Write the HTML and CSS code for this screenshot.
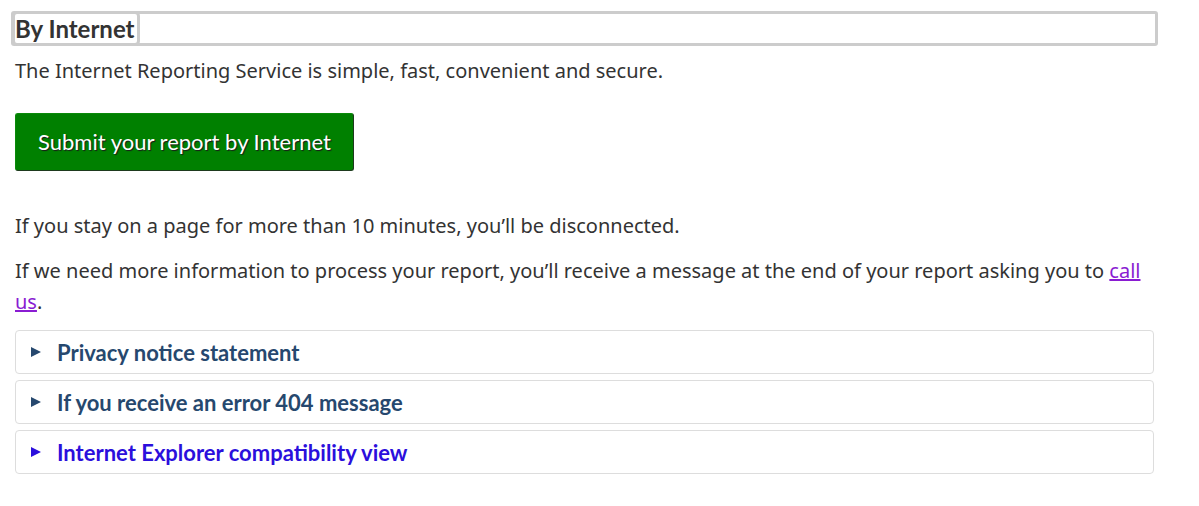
FILE: index.html
```html
<!DOCTYPE html>
<html lang="en">
<head>
<meta charset="utf-8">
<title>By Internet</title>
<link rel="stylesheet" href="styles.css">
</head>
<body>
<main class="page">
  <h2 class="section-title"><span class="section-title-text">By Internet</span></h2>
  <p class="lead">The Internet Reporting Service is simple, fast, convenient and secure.</p>
  <div class="cta-row"><a class="btn-cta" href="#">Submit your report by Internet</a></div>
  <p class="text">If you stay on a page for more than 10 minutes, you’ll be disconnected.</p>
  <p class="text">If we need more information to process your report, you’ll receive a message at the end of your report asking you to <a class="link" href="#">call us</a>.</p>
  <div class="panels">
    <details class="panel"><summary class="panel-summary"><span class="arrow"></span>Privacy notice statement</summary></details>
    <details class="panel"><summary class="panel-summary"><span class="arrow"></span>If you receive an error 404 message</summary></details>
    <details class="panel"><summary class="panel-summary panel-summary-hover"><span class="arrow"></span>Internet Explorer compatibility view</summary></details>
  </div>
</main>
</body>
</html>
```

FILE: styles.css
```css
html, body {
  margin: 0;
  padding: 0;
  background: #fff;
}
body {
  font-family: "Noto Sans", "Open Sans", sans-serif;
  color: #333;
}
.page {
  width: 1139px;
  padding: 0 15px;
  display: flex;
  flex-direction: column;
}
.section-title {
  margin: 11px -4px 0;
  border: 3px solid #ccc;
  border-radius: 3px;
  font-family: Lato, sans-serif;
  font-weight: 700;
  font-size: 24px;
  line-height: 29px;
  height: 29px;
  padding: 0 1px;
  color: #333;
}
.section-title-text {
  display: inline-block;
  outline: 3px solid #ccc;
  outline-offset: 0;
  margin-top: -2px;
  padding: 0 2px 0 0;
  border-radius: 2px;
}
.lead, .text {
  margin: 0;
  font-size: 20px;
  line-height: 31px;
}
.lead {
  margin-top: 9px;
}
.cta-row {
  margin-top: 27px;
  margin-bottom: 39px;
  display: flex;
}
.btn-cta {
  display: inline-block;
  background: #008000;
  border: 1px solid #1e3a1e;
  border-top-color: #0a8a0a;
  border-left-color: #0a8a0a;
  border-radius: 3px;
  color: #fff;
  text-decoration: none;
  font-family: Lato, sans-serif;
  font-size: 22px;
  line-height: 26px;
  padding: 15px 22px 15px;
  text-shadow: 1px 1px 1px #1a1a1a;
}
.text + .text {
  margin-top: 14px;
}
.link {
  color: #8a1cd2;
}
.panels {
  margin-top: 13px;
  display: flex;
  flex-direction: column;
  gap: 6px;
}
.panel {
  border: 1px solid #ddd;
  border-radius: 4px;
}
.panel-summary {
  list-style: none;
  display: flex;
  align-items: center;
  height: 42px;
  padding-left: 15px;
  font-family: Lato, sans-serif;
  font-weight: 700;
  font-size: 22px;
  color: #26486e;
  cursor: pointer;
}
.panel-summary::-webkit-details-marker {
  display: none;
}
.panel-summary-hover {
  color: #2b0fdc;
}
.arrow {
  width: 0;
  height: 0;
  border-top: 5px solid transparent;
  border-bottom: 5px solid transparent;
  border-left: 10px solid currentColor;
  margin-right: 16px;
}
```
